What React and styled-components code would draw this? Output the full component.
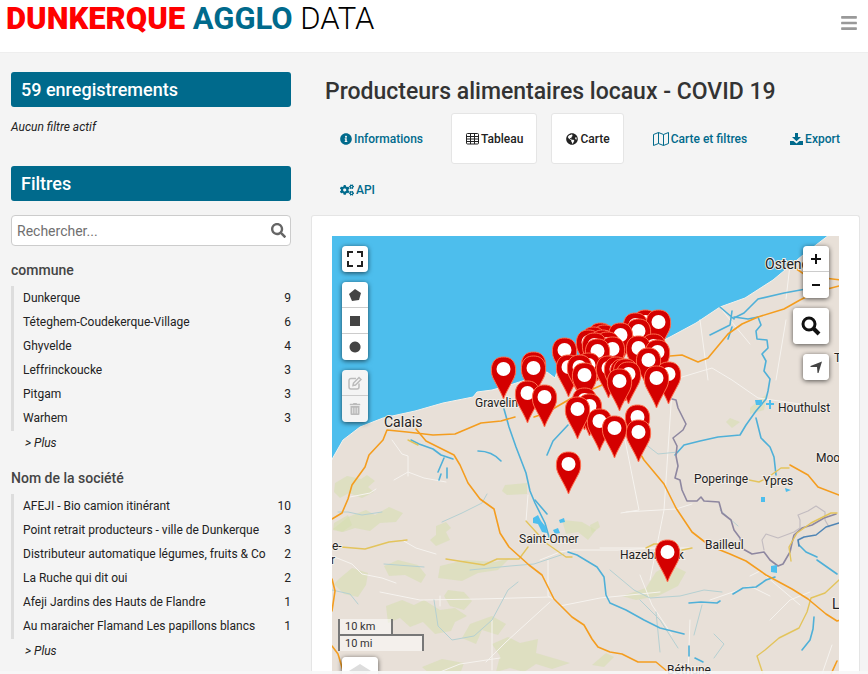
import React from "react";
import styled, { createGlobalStyle } from "styled-components";
import {
  FaInfoCircle,
  FaGlobeAmericas,
  FaCogs,
  FaSearch,
  FaBars,
  FaTrashAlt,
} from "react-icons/fa";

const GlobalStyle = createGlobalStyle`
  * {
    box-sizing: border-box;
  }
  body {
    margin: 0;
    background: #f4f4f4;
    color: #333;
    font-family: Roboto, "Liberation Sans", sans-serif;
    font-size: 12px;
    line-height: 18px;
  }
  button,
  input {
    font-family: inherit;
  }
`;

const Page = styled.div`
  display: flex;
  flex-direction: column;
  height: 100vh;
  overflow: hidden;
`;
const Header = styled.header`
  display: flex;
  flex: none;
  justify-content: space-between;
  background: #fff;
  border-bottom: 1px solid #eee;
  padding: 0 10px 15px 6px;
`;
const Logo = styled.a`
  color: #000;
  font-size: 31px;
  line-height: 37px;
  font-weight: 300;
  text-decoration: none;
`;
const LogoWord = styled.span`
  color: ${(props) => props.color};
  font-weight: ${(props) => props.weight};
`;
const MenuButton = styled.button`
  display: flex;
  align-items: center;
  border: 0;
  padding: 8px 0 0;
  background: none;
  color: #999;
  font-size: 18px;
`;
const Columns = styled.div`
  display: flex;
  flex: 1;
  min-height: 0;
  gap: 20px;
  padding: 0 8px 0 11px;
`;
const Sidebar = styled.aside`
  flex: none;
  width: 280px;
  padding-top: 19px;
`;
const Banner = styled.h2`
  margin: 0;
  padding: 0 10px;
  border-radius: 3px;
  background: #006a8c;
  color: #fff;
  font-size: 18px;
  line-height: 35px;
  font-weight: 500;
`;
const NoFilter = styled.p`
  margin: 11px 0 30px;
  color: #222;
  font-style: italic;
`;
const SearchBox = styled.form`
  display: flex;
  align-items: center;
  height: 31px;
  margin: 14px 0 15px;
  padding: 0 4px 0 5px;
  border: 1px solid #ccc;
  border-radius: 4px;
  background: #fff;
`;
const SearchInput = styled.input`
  flex: 1;
  min-width: 0;
  border: 0;
  padding: 0;
  outline: 0;
  background: none;
  font-size: 14px;
  &::placeholder {
    color: #707070;
  }
`;
const SearchButton = styled.button`
  display: flex;
  border: 0;
  padding: 0;
  background: none;
  color: #666;
  font-size: 15px;
`;
const FacetTitle = styled.h3`
  margin: 0;
  color: #444;
  font-size: 14px;
  line-height: 18px;
  font-weight: 500;
`;
const FacetList = styled.ul`
  margin: 7px 0 3px;
  padding: 0 0 1px;
  border-left: 3px solid #ddd;
  list-style: none;
`;
const FacetLink = styled.a`
  display: flex;
  justify-content: space-between;
  padding: 3px 0 3px 9px;
  color: #222;
  line-height: 18px;
  text-decoration: none;
  white-space: nowrap;
`;
const More = styled.a`
  display: block;
  margin-bottom: 17px;
  padding-left: 14px;
  color: #222;
  font-style: italic;
  text-decoration: none;
`;
const Main = styled.main`
  display: flex;
  flex: 1;
  flex-direction: column;
  min-width: 0;
`;
const Title = styled.h1`
  margin: 22px 14px 5px;
  color: #333;
  font-size: 23px;
  line-height: 33px;
  font-weight: 500;
`;
const Tabs = styled.nav`
  display: flex;
  flex-wrap: wrap;
  column-gap: 14px;
  padding: 0 0 0 14px;
`;
const Tab = styled.a`
  display: flex;
  align-items: center;
  gap: 2px;
  height: 51px;
  padding: 0 13px 0 14px;
  border: 1px solid ${(props) => (props.$boxed ? "#e5e5e5" : "transparent")};
  border-radius: 3px;
  background: ${(props) => (props.$boxed ? "#fff" : "none")};
  color: ${(props) => (props.$boxed ? "#222" : "#006a8c")};
  font-weight: 500;
  text-decoration: none;
  white-space: nowrap;
`;
const Panel = styled.section`
  display: flex;
  flex: 1;
  min-height: 0;
  padding: 20px 20px 0;
  border: 1px solid #e5e5e5;
  border-bottom: 0;
  border-radius: 3px 3px 0 0;
  background: #fff;
`;
const MapCanvas = styled.div`
  position: relative;
  flex: 1;
  overflow: hidden;
  background: #e8e0d8;
`;
const MapSvg = styled.svg`
  display: block;
  width: 100%;
  height: 100%;
`;
const Controls = styled.div`
  position: absolute;
  top: ${(props) => (props.$bottom ? "auto" : "10px")};
  bottom: ${(props) => (props.$bottom ? "-19px" : "auto")};
  left: ${(props) => (props.$right ? "auto" : props.$bottom ? "6px" : "10px")};
  right: ${(props) => (props.$right ? "10px" : "auto")};
  display: flex;
  flex-direction: column;
  align-items: ${(props) => (props.$right ? "flex-end" : "flex-start")};
  gap: 10px;
`;
const ControlGroup = styled.div`
  display: flex;
  flex-direction: column;
  overflow: hidden;
  margin-left: ${(props) => (props.$indent ? "4px" : 0)};
  border-radius: 4px;
  box-shadow: 0 1px 5px rgba(0, 0, 0, 0.65);
`;
const ControlButton = styled.button`
  display: flex;
  align-items: center;
  justify-content: center;
  width: ${(props) => (props.$large ? "36px" : "26px")};
  height: ${(props) => (props.$large ? "36px" : "26px")};
  padding: 0;
  border: 0;
  border-bottom: 1px solid #ccc;
  background: ${(props) => (props.disabled ? "#f4f4f4" : "#fff")};
  color: ${(props) => (props.disabled ? "#bbb" : "#222")};
  font-size: 12px;
  &:last-child {
    border-bottom: 0;
  }
`;
const Scale = styled.div`
  margin-bottom: -4px;
  color: #333;
  font-size: 11px;
  line-height: 15px;
`;
const ScaleLine = styled.div`
  width: ${(props) => props.width};
  padding: 0 5px;
  border: 2px solid #777;
  border-top-width: ${(props) => (props.$imperial ? "2px" : 0)};
  border-bottom-width: ${(props) => (props.$imperial ? 0 : "2px")};
  margin-top: ${(props) => (props.$imperial ? "-2px" : 0)};
  background: rgba(255, 255, 255, 0.5);
`;
const BottomBar = styled.div`
  position: fixed;
  right: 0;
  bottom: 0;
  left: 0;
  height: 3px;
  background: rgba(247, 247, 247, 0.9);
`;

const communes = [
  ["Dunkerque", 9],
  ["Téteghem-Coudekerque-Village", 6],
  ["Ghyvelde", 4],
  ["Leffrinckoucke", 3],
  ["Pitgam", 3],
  ["Warhem", 3],
];
const companies = [
  ["AFEJI - Bio camion itinérant", 10],
  ["Point retrait producteurs - ville de Dunkerque", 3],
  ["Distributeur automatique légumes, fruits & Co", 2],
  ["La Ruche qui dit oui", 2],
  ["Afeji Jardins des Hauts de Flandre", 1],
  ["Au maraicher Flamand Les papillons blancs", 1],
];

// centre of each pin's white dot, back to front
const pins = [
  [645, 322], [635, 325], [658, 322], [638, 331],
  [600, 335], [604, 337], [593, 339], [620, 335], [588, 342], [602, 342],
  [607, 344], [594, 345], [564, 350], [612, 349], [597, 351],
  [653, 346], [638, 348], [657, 352], [648, 360],
  [533, 364], [533, 368], [588, 365], [568, 367], [579, 367], [584, 375],
  [608, 368], [616, 369], [622, 371], [625, 371], [628, 374],
  [668, 374], [656, 378], [619, 381], [503, 369],
  [527, 393], [544, 397], [584, 400], [589, 406], [577, 409],
  [599, 421], [637, 417], [614, 428], [638, 432], [568, 464], [667, 552],
];

const towns = [
  [765, 269, "Ostende", 14],
  [384, 427, "Calais", 14],
  [475, 407, "Gravelines", 12],
  [778, 412, "Houthulst", 12],
  [834, 362, "Tielt", 12],
  [816, 462, "Moorslede", 12],
  [694, 483, "Poperinge", 12],
  [763, 485, "Ypres", 12],
  [519, 543, "Saint-Omer", 12],
  [620, 559, "Hazebrouck", 12],
  [705, 549, "Bailleul", 12],
  [832, 609, "Lille", 14],
  [667, 674, "Béthune", 12],
  [332, 550, "e-", 12],
  [331, 564, "r", 12],
];

const forests = [
  "M335 483l12-7 14 3 6-4 8 6-7 6 6 5-12 6-13-5-9 5-6-6z",
  "M348 517l18-7 9 5 14-8 14 6-7 9-16 1-10 8-15-3-12 4-10-3z",
  "M334 523l14-8 4 10-10 7-9-2z",
  "M436 526l10-4 5 6-5 4 4 8-14 6-6-6 6-5z",
  "M505 485l22-2v11l-20 1-5-4z",
  "M384 566l14-6 20 5 8 10-5 8-16-8-16 1z",
  "M340 578l12-10 16 5-2 12-8 12-14-3-10-10z",
  "M440 566l25-6 30 2 15-4-12 12-20 3-16 8-24-3z",
  "M386 606l16-6 12 5 10-5 16 10 15-2 12 8-12 6-4 9-16 3-12-12-13 5-10-9-12 5z",
  "M448 590l16 2 8 9-8 9-14-4-6-10z",
  "M470 624l22-8 14 8-8 11-16-5-6 14-14-6z",
  "M492 644l16-7 12 6 18-4-2 14 34 10-18 6-16-5-12 8-14-4-14 4 4-16z",
  "M422 667l20-8 22 4-4 11h-30z",
  "M656 572l14-8 16 8-8 14-20 10-22 4-14-4 24-8z",
  "M750 408l9-8 8-6-3 16-14 4z",
  "M730 418l10 4-8 6-6-6z",
  "M562 520l20 2 14 8-8 10-10-8-12 2z",
  "M590 525l8-4 2 6-8 6z",
  "M592 665l14-12 8 4-10 10z",
];

const canals = [
  "M411 440l8 4 14 5 8 6 12 4M444 458l-6 14M441 474l-2 6M447 468v10",
  "M478 451q14 0 23 10",
  "M504 409l5 18 7 20 10 26 4 18 5 12 10 20 4 14",
  "M535 500l12 14",
  "M568 425l-15 16-6 14",
  "M568 552l9 3 10 6 10 6 7 10 2 18 4 8 16 7 18 10 16 8 24 6",
  "M689 646v10M695 658l8 4",
  "M689 603l12-1 16 1 3-2M733 594l10-6 13-1 10-7 9-3",
  "M814 617l-1 12-3 11-8 10",
  "M799 545l7 7 11 5M817 560l20 14",
  "M734 318l10-5 14-14 26-6 22-4M720 307l14 12M710 335l20-10 2-14M732 327l-4 12",
  "M734 317l14 2 10-2 3 8-5 6 1 8 10 1 1 8-6 6 4 7-2 10 6 8-2 12-2 8-10 12-10 14-6 10-22 2-18 4-16 4-9 10",
  "M756 418l5 20 9 9 4 10 2 18",
];

const creeks = [
  "M338 512l10 0 14 3 20-3M442 522l20-9 20-10 5-9M384 564l40 3M332 590l18 4 8 10",
  "M434 600l4 26 14 14 22-4 18-16 16-30 10-8M470 570l40-4 24-2 30-10",
  "M610 570l24 20 16 8 30-2 24-6 18 2M640 600l20 20 18 28M656 612l4 40",
  "M702 605l-8 30M714 634l10 10-10 14M640 440l18 14 20-2M720 510l18 16",
];

const minorRoads = [
  "M332 556l20 8 10 10 20 4 14 5M394 480l14-8 16 6 22 4M392 440l10 14 6 2v20",
  "M350 497l20-4 6-4M402 540l14 8 20 6M380 592l40 8 60-1 70-2M440 596v10",
  "M528 495l-2 26M540 560l20-8 12-2 46 0 40-2M548 560v36l10 6",
  "M623 430l10 50 6 30-18 3M626 512l50-3 16-5M672 390l-8 120-14 70",
  "M600 548l90 0M640 575l12 30 20 30M560 606l40-8 60-6M492 620v50M550 602l-44 40-20 20",
  "M722 310l18 22 10 12M672 380l40-12 20 12 26 18 70 10M700 320l8 60M786 320l-10 60",
  "M790 265l-4 34M710 600l40-14 20 10M770 620l20-20 20-8M832 645l-10 29",
  "M690 620l-2 54M440 672l20-8 40-6M800 605l-40-34-10 5",
];

const yellowRoads = [
  "M341 547l24 2 24-7 18-2M446 559l38 6 13-6 22 0 9-12",
  "M526 521l20 22 20 14 6 0M408 440l10 5M749 480l10 2 8-4 14-10 8 0",
  "M646 548l8-4 12 0M682 550l10-2M837 513l-6 0-20 10-14 10-8 14 2 14",
  "M839 580l-14 13-14 5-4 14-8 16-20 10-14 12-8 6 6 18",
];

const highways = [
  "M332 519l10-6 6-14 4-14 13-18 4-12 14-15 4-10 20 2 26 3 22-1 26-11 20-2 14-4",
  "M416 429l10 12 28 14 6 10 8 18 12 16 14 10 6 24 9 14 20 18 13 10 12 24 18 18 12 8 8 14 6 8 12 5 12 2 16 8 18 0 12 10",
  "M534 417l12-4 24-14 32-14",
  "M638 450l6 10 20 24 12 24 16 24 18 14 20 8 16 7 20 14 26 14 16 10 18 15 11 7 14-4 8 2",
  "M670 356l12-1 16 7 10-4 20-24 14-10 16-7 26-8 16-9 16-8 23-6M790 465l18 10 10 12 21 8M795 268l12 8 34 4",
  "M332 579l3 12-3 20M332 646l6 8 6 20M837 661l-6 13",
];

const Pin = ({ x, y }) => (
  <g transform={`translate(${x} ${y})`}>
    <path
      d="M.5 30C-2 23-6 17-10 9C-12 5-12-1-11-4C-9-10-5-12 .5-12S10-10 12-4C13-1 13 5 11 9C7 17 3 23 .5 30Z"
      fill="#d40000"
      stroke="#ff6f4f"
      strokeWidth="1"
    />
    <circle cx=".5" r="7" fill="#fff" />
  </g>
);

const Map = () => (
  <MapSvg
    viewBox="332 236 507 438"
    preserveAspectRatio="xMinYMin slice"
    role="img"
    aria-label="Carte des producteurs"
  >
    <path fill="#e8e0d8" d="M332 236h507v438h-507z" />
    <path
      fill="#4dbeed"
      stroke="#f4f0ea"
      strokeWidth="1"
      d="M331 235H829L803 255L773 280L745 298L720 307L696 323L670 337L640 352L600 352L560 362L555 378L547 372L538 376L510 385L492 390L477 392L473 397L443 403L415 411L383 418L360 427L343 440L331 461Z"
    />
    {forests.map((d) => (
      <path key={d} d={d} fill="#d6dfae" opacity="0.55" />
    ))}
    <g fill="none" strokeLinejoin="round" strokeLinecap="round">
      {minorRoads.map((d) => (
        <path key={d} d={d} stroke="#f6f3ef" strokeWidth="1" />
      ))}
      {creeks.map((d) => (
        <path key={d} d={d} stroke="#b5d0d2" strokeWidth="1" />
      ))}
      {canals.map((d) => (
        <path key={d} d={d} stroke="#4fb0d8" strokeWidth="1.6" />
      ))}
      <path
        d="M764 550l-2-10 4-6 12 4 16-6 6-4 0-8-2-5 10-4 8-5 9 6v8l4 7"
        stroke="#c3bcc0"
        strokeWidth="1.2"
      />
      <path
        d="M672 399l4 1 2 8 8 16-3 6-10 8 4 8-1 10 2 10-3 12 5 2 2 10 5 11 10 0 4-4 3 4 15 1 3 11 9 7 3 10 6 8 3 11 9 5 12-2 6 8 8 6 5-2 7-12 2-9 2-8 8-7 10-3 12-7 12-4"
        stroke="#8e87a0"
        strokeWidth="1.6"
      />
      <path d="M799 546l-1-6 6-3 12-2 10-8 13-4" stroke="#4f85b5" strokeWidth="1.6" />
      {yellowRoads.map((d) => (
        <path key={d} d={d} stroke="#e3c45c" strokeWidth="1.4" />
      ))}
      {highways.map((d) => (
        <path key={d} d={d} stroke="#f49d1f" strokeWidth="1.6" />
      ))}
    </g>
    <path
      fill="#4dbeed"
      d="M533 518l5-3 3 6 5 6 1 6-5-1-4-8-5-1zM553 530l5-2 2 5-5 1zM559 520l5-2 1 4-5 1zM771 566v6l6 1v-8zM755 400h7v5h-6zM769 400h2v3h3v2h-3v4h-2v-4h-3v-2h3zM761 497h4v5h-4zM785 488l6 2-5 2z"
    />
    <g fill="#222" fontFamily="Roboto, sans-serif" stroke="#f2ede7" paintOrder="stroke">
      {towns.map(([x, y, name, size]) => (
        <text key={name} x={x} y={y} fontSize={size} strokeWidth="2">
          {name}
        </text>
      ))}
    </g>
    {pins.map(([x, y], i) => (
      <Pin key={i} x={x} y={y} />
    ))}
  </MapSvg>
);

const TableIcon = () => (
  <svg width="13" height="12" viewBox="0 0 13 12" fill="none" stroke="currentColor">
    <rect x="0.5" y="0.5" width="12" height="10.5" rx="1" />
    <path d="M1 3.5h11M1 6h11M1 8.5h11M4.5 1v10M8.5 1v10" />
  </svg>
);
const MapIcon = () => (
  <svg width="16" height="14" viewBox="0 0 16 14" fill="none" stroke="currentColor">
    <path d="M.5 2.5l5-2 5 2 5-2v11l-5 2-5-2-5 2zM5.500 .5v11M10.500 2.500v11" />
  </svg>
);
const DownloadIcon = () => (
  <svg width="13" height="12" viewBox="0 0 13 12" fill="currentColor">
    <path d="M5 0h3v4h3L6.5 8.2L2 4h3zM0 8h3.5l3 2.5L9.5 8H13v4H0z" />
  </svg>
);
const ExpandIcon = () => (
  <svg width="16" height="16" viewBox="0 0 16 16" fill="none" stroke="currentColor" strokeWidth="2">
    <path d="M1 6V1h5M10 1h5v5M15 10v5h-5M6 15H1v-5" />
  </svg>
);
const EditIcon = () => (
  <svg width="14" height="14" viewBox="0 0 14 14" fill="none" stroke="currentColor" strokeWidth="1.5">
    <path d="M8 2.5H3a2 2 0 0 0-2 2V11a2 2 0 0 0 2 2h6a2 2 0 0 0 2-2V7.5" />
    <path d="M5 9.5l.5-2.5L11 1.5l2 2L7.5 9z" />
  </svg>
);
const SearchIcon = () => (
  <svg width="20" height="20" viewBox="0 0 20 20" fill="none" stroke="#111" strokeWidth="3">
    <circle cx="8" cy="8" r="6" />
    <path d="M12.5 12.5L18 18" strokeWidth="4" />
  </svg>
);
const Shape = ({ d }) => (
  <svg width="12" height="12" viewBox="0 0 12 12" fill="#444">
    <path d={d} />
  </svg>
);
const LayersIcon = () => (
  <svg width="26" height="26" viewBox="0 0 26 26" fill="#ddd">
    <path d="M13 2l11 7-11 7L2 9z" />
    <path d="M2 13l11 7 11-7v3l-11 7-11-7z" fill="#bbb" />
  </svg>
);

const Facet = ({ title, items }) => (
  <section>
    <FacetTitle>{title}</FacetTitle>
    <FacetList>
      {items.map(([name, count]) => (
        <li key={name}>
          <FacetLink href="#">
            <span>{name}</span>
            <span>{count}</span>
          </FacetLink>
        </li>
      ))}
    </FacetList>
    <More href="#">&gt; Plus</More>
  </section>
);

export default function App() {
  return (
    <Page>
      <GlobalStyle />
      <Header>
        <Logo href="#">
          <LogoWord color="#f00" weight={900}>DUNKERQUE</LogoWord>{" "}
          <LogoWord color="#006a8c" weight={700}>AGGLO</LogoWord> DATA
        </Logo>
        <MenuButton aria-label="Menu">
          <FaBars />
        </MenuButton>
      </Header>
      <Columns>
        <Sidebar>
          <Banner>59 enregistrements</Banner>
          <NoFilter>Aucun filtre actif</NoFilter>
          <Banner>Filtres</Banner>
          <SearchBox>
            <SearchInput aria-label="Rechercher" placeholder="Rechercher..." />
            <SearchButton type="button" aria-label="Lancer la recherche">
              <FaSearch />
            </SearchButton>
          </SearchBox>
          <Facet title="commune" items={communes} />
          <Facet title="Nom de la société" items={companies} />
        </Sidebar>
        <Main>
          <Title>Producteurs alimentaires locaux - COVID 19</Title>
          <Tabs>
            <Tab href="#"><FaInfoCircle />Informations</Tab>
            <Tab href="#" $boxed><TableIcon />Tableau</Tab>
            <Tab href="#" $boxed><FaGlobeAmericas />Carte</Tab>
            <Tab href="#"><MapIcon />Carte et filtres</Tab>
            <Tab href="#"><DownloadIcon />Export</Tab>
            <Tab href="#"><FaCogs size={14} />API</Tab>
          </Tabs>
          <Panel>
            <MapCanvas>
              <Map />
              <Controls>
                <ControlGroup>
                  <ControlButton aria-label="Plein écran"><ExpandIcon /></ControlButton>
                </ControlGroup>
                <ControlGroup>
                  <ControlButton aria-label="Polygone">
                    <Shape d="M6 0L12 4L10 11L3 12L0 5Z" />
                  </ControlButton>
                  <ControlButton aria-label="Rectangle">
                    <Shape d="M1 1h10v10H1z" />
                  </ControlButton>
                  <ControlButton aria-label="Cercle">
                    <Shape d="M6 .5a5.5 5.5 0 1 0 .1 0z" />
                  </ControlButton>
                </ControlGroup>
                <ControlGroup>
                  <ControlButton aria-label="Modifier" disabled><EditIcon /></ControlButton>
                  <ControlButton aria-label="Supprimer" disabled><FaTrashAlt /></ControlButton>
                </ControlGroup>
              </Controls>
              <Controls $right>
                <ControlGroup>
                  <ControlButton aria-label="Zoomer">
                    <svg width="10" height="10" stroke="#111" strokeWidth="2"><path d="M5 0v10M0 5h10" /></svg>
                  </ControlButton>
                  <ControlButton aria-label="Dézoomer">
                    <svg width="8" height="2" stroke="#111" strokeWidth="2"><path d="M0 1h8" /></svg>
                  </ControlButton>
                </ControlGroup>
                <ControlGroup>
                  <ControlButton $large aria-label="Rechercher un lieu"><SearchIcon /></ControlButton>
                </ControlGroup>
                <ControlGroup>
                  <ControlButton aria-label="Me localiser">
                    <Shape d="M12 .5L8.5 12L7.5 12L7 6L.5 6V5Z" />
                  </ControlButton>
                </ControlGroup>
              </Controls>
              <Controls $bottom>
                <Scale>
                  <ScaleLine width="55px">10 km</ScaleLine>
                  <ScaleLine width="86px" $imperial>10 mi</ScaleLine>
                </Scale>
                <ControlGroup $indent>
                  <ControlButton $large aria-label="Fonds de carte"><LayersIcon /></ControlButton>
                </ControlGroup>
              </Controls>
            </MapCanvas>
          </Panel>
        </Main>
      </Columns>
      <BottomBar />
    </Page>
  );
}
